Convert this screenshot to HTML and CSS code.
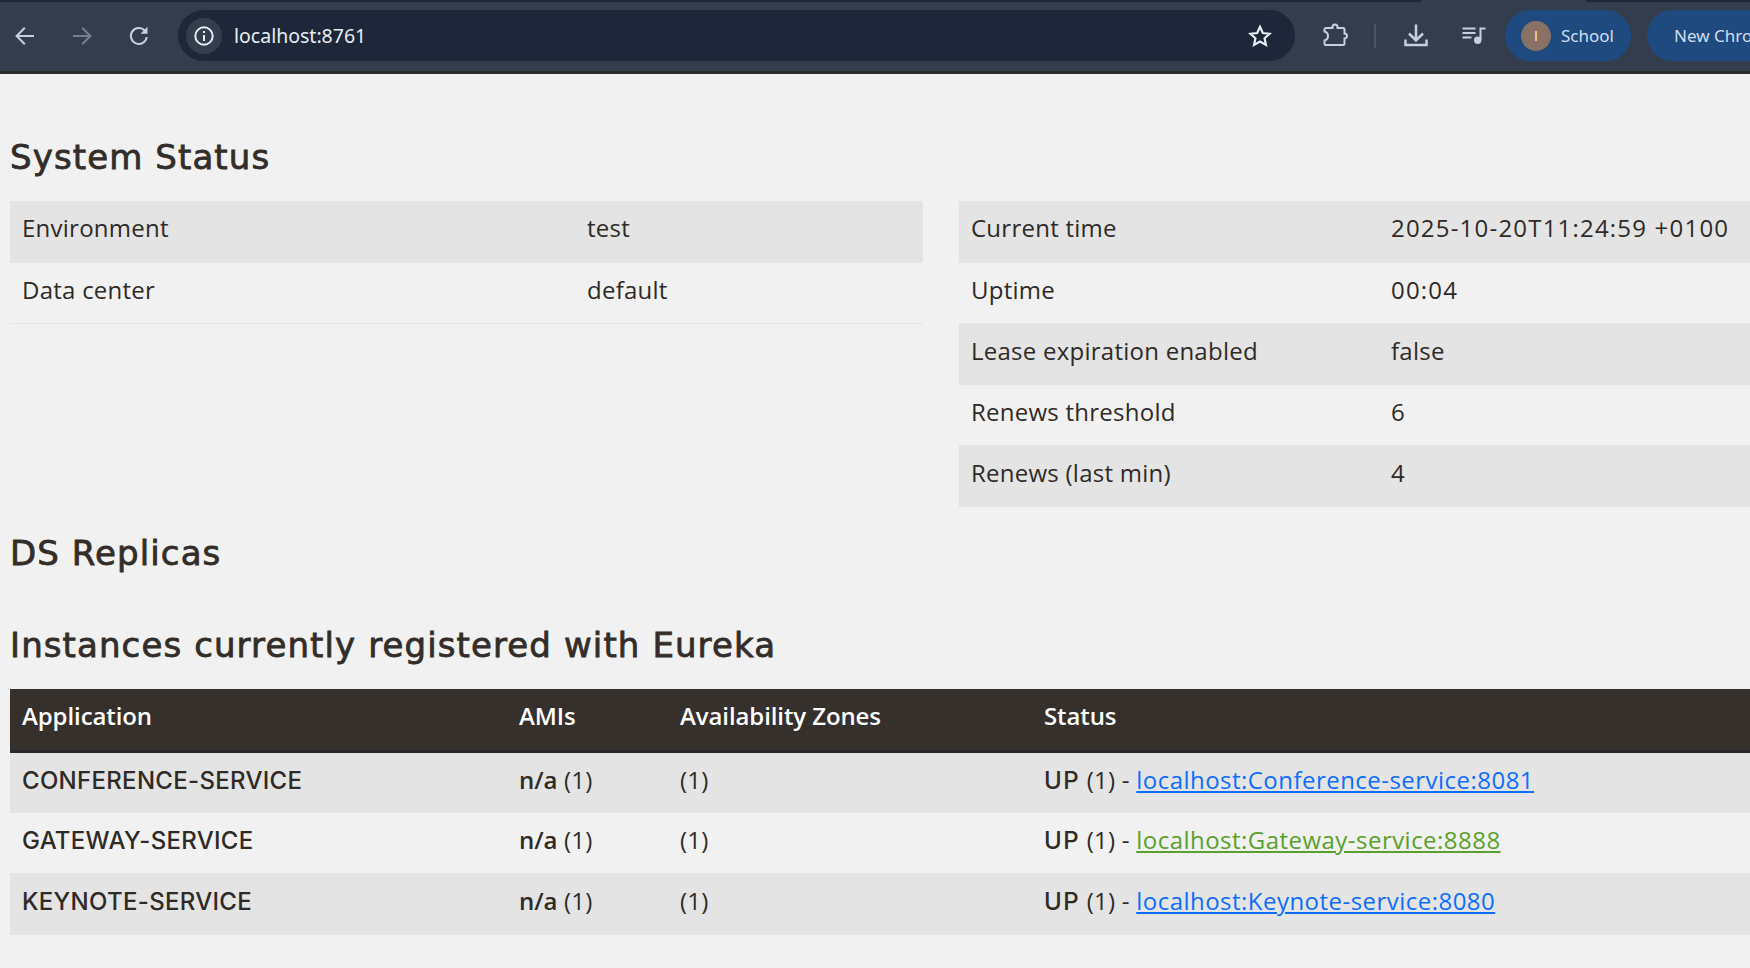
FILE: index.html
```html
<!DOCTYPE html>
<html lang="en">
<head>
<meta charset="utf-8">
<title>Eureka</title>
<link rel="stylesheet" href="styles.css">
</head>
<body>
<header class="chrome">
  <div class="tabstrip"><span class="tab-dark left-dark"></span><span class="tab-dark right-dark"></span></div>
  <div class="toolbar">
    <button class="nav"><svg viewBox="0 0 24 24" width="24" height="24"><path d="M21 12H4.500M11.800 3.800 3.600 12l8.200 8.200" class="st"/></svg></button>
    <button class="nav dim"><svg viewBox="0 0 24 24" width="24" height="24"><path d="M3 12h16.500M12.200 3.800 20.400 12l-8.200 8.200" class="st"/></svg></button>
    <button class="nav"><svg viewBox="0 0 24 24" width="24" height="24"><path d="M19.800 13.200A8 8 0 1 1 17.800 6.500" class="st"/><path d="M20.500 2.800v7h-7z" class="fl"/></svg></button>
    <div class="omnibox">
      <span class="info"><svg viewBox="0 0 24 24" width="24" height="24"><circle cx="12" cy="12" r="8.700" class="st wh"/><path d="M12 11v6M12 7v2" class="st wh"/></svg></span>
      <span class="url">localhost:8761</span>
      <svg class="star" viewBox="0 0 24 24" width="26" height="26"><path d="m12 3.500 2.600 5.700 6.200.7-4.600 4.200 1.300 6.100-5.500-3.100-5.500 3.100 1.300-6.100-4.600-4.200 6.200-.7z" class="st wh"/></svg>
    </div>
    <svg class="tool ext" viewBox="0 0 26 26" width="26" height="26"><path d="M3 5H9.500V4a2.500 2.500 0 0 1 5 0V5H20a1.500 1.500 0 0 1 1.500 1.500V10.500a2.500 2.500 0 0 1 0 5V20.500A1.500 1.500 0 0 1 20 22H3a1.500 1.500 0 0 1-1.500-1.500V17.500C4 16.800 5 15 5 13S4 9.200 1.500 8.500V6.500A1.500 1.500 0 0 1 3 5Z" class="st"/></svg>
    <span class="sep"></span>
    <svg class="tool dl" viewBox="0 0 26 26" width="26" height="26"><path d="M13 1.500V17M6 10.500l7 7 7-7M2.500 16.500V22h21v-5.500" class="st thick"/></svg>
    <svg class="tool media" viewBox="0 0 26 26" width="26" height="26"><path d="M1.500 5.500h13M1.500 10h13M1.500 14.500h9" class="st"/><path d="M19.500 17V5.500H24.500" class="st"/><circle cx="16.700" cy="17.200" r="3.700" class="fl"/></svg>
    <div class="pill profile"><span class="avatar">I</span><span>School</span></div>
    <div class="pill newchrome"><span>New Chrome available</span></div>
  </div>
</header>
<main class="page">
  <h2 class="h-status">System Status</h2>
  <div class="status-grid">
    <table class="tbl left">
      <tr class="odd"><td class="c1">Environment</td><td>test</td></tr>
      <tr><td class="c1">Data center</td><td>default</td></tr>
    </table>
    <table class="tbl right">
      <tr class="odd"><td class="c1r">Current time</td><td class="num">2025-10-20T11:24:59 +0100</td></tr>
      <tr><td class="c1r">Uptime</td><td class="num">00:04</td></tr>
      <tr class="odd"><td class="c1r">Lease expiration enabled</td><td>false</td></tr>
      <tr><td class="c1r">Renews threshold</td><td>6</td></tr>
      <tr class="odd"><td class="c1r">Renews (last min)</td><td>4</td></tr>
    </table>
  </div>
  <h2 class="h-ds">DS Replicas</h2>
  <h2 class="h-inst">Instances currently registered with Eureka</h2>
  <table class="tbl inst">
    <thead>
      <tr><th class="a">Application</th><th class="b">AMIs</th><th class="c">Availability Zones</th><th>Status</th></tr>
    </thead>
    <tbody>
      <tr class="odd"><td><b class="caps">CONFERENCE-SERVICE</b></td><td><b>n/a</b> (1)</td><td>(1)</td><td><b class="caps up">UP</b> (1) - <a href="#" class="blue">localhost:Conference-service:8081</a></td></tr>
      <tr><td><b class="caps">GATEWAY-SERVICE</b></td><td><b>n/a</b> (1)</td><td>(1)</td><td><b class="caps up">UP</b> (1) - <a href="#" class="green">localhost:Gateway-service:8888</a></td></tr>
      <tr class="odd"><td><b class="caps">KEYNOTE-SERVICE</b></td><td><b>n/a</b> (1)</td><td>(1)</td><td><b class="caps up">UP</b> (1) - <a href="#" class="blue">localhost:Keynote-service:8080</a></td></tr>
    </tbody>
  </table>
  <h2 class="h-gen">General Info</h2>
</main>
</body>
</html>
```
FILE: styles.css
```css
html, body { margin: 0; padding: 0; height: 100%; overflow: hidden; }
body { background: #f1f1f1; color: #2f2a26; font-family: "Open Sans", "Noto Sans", sans-serif; width: 1750px; height: 968px; }
.chrome { background: #343d4e; height: 74px; border-bottom: 3px solid #2c2c2c; box-sizing: border-box; overflow: hidden; }
.tabstrip { display: flex; justify-content: space-between; height: 2px; }
.tab-dark { background: #1f2839; height: 2px; }
.left-dark { width: 1421px; }
.right-dark { width: 164px; }
.toolbar { display: flex; align-items: center; height: 67px; white-space: nowrap; }
.nav { width: 24px; height: 24px; padding: 0; border: 0; background: none; margin-left: 13px; margin-right: 20px; flex: none; }
.nav.dim { opacity: .45; }
.st { fill: none; stroke: #c7d0e0; stroke-width: 2; }
.thick { stroke-width: 2.500; }
.wh { stroke: #e8ecf3; }
.fl { fill: #c7d0e0; }
.omnibox { display: flex; align-items: center; flex: none; width: 1117px; height: 51px; margin-left: 7px; border-radius: 26px; background: #1e2739; padding-left: 8px; box-sizing: border-box; }
.info { display: flex; align-items: center; justify-content: center; width: 36px; height: 36px; border-radius: 50%; background: #343d4e; }
.url { color: #e8ecf3; font-size: 19.500px; font-family: "Noto Sans", sans-serif; margin-left: 12px; flex: 1; }
.star { margin-right: 22px; }
.tool { flex: none; }
.ext { margin-left: 28px; }
.sep { width: 2px; height: 24px; background: #4a5364; margin: 0 27px 0 25px; flex: none; }
.media { margin-left: 32px; }
.pill { display: flex; align-items: center; height: 51px; border-radius: 26px; background: #1e4a80; color: #d3def0; font-size: 17px; font-family: "Noto Sans", sans-serif; flex: none; }
.profile { width: 126px; margin-left: 18px; padding-left: 16px; box-sizing: border-box; }
.avatar { display: flex; align-items: center; justify-content: center; width: 30px; height: 30px; border-radius: 50%; background: #8a7165; color: #f4efec; font-family: "Open Sans", sans-serif; font-size: 14px; margin-right: 10px; }
.newchrome { width: 260px; margin-left: 16px; padding-left: 27px; box-sizing: border-box; }
.page { padding: 0 10px; width: 1800px; box-sizing: border-box; }
h2 { font-family: "DejaVu Sans", sans-serif; font-weight: 400; -webkit-text-stroke: .8px #332d29; font-size: 34px; letter-spacing: 1.100px; line-height: 40px; margin: 0; color: #332d29; }
.h-status { margin-top: 63px; }
.status-grid { display: flex; gap: 36px; margin-top: 24px; align-items: flex-start; }
.tbl { border-collapse: collapse; font-size: 24px; letter-spacing: .25px; }
.tbl td, .tbl th { padding: 0 12px 7px; height: 61px; box-sizing: border-box; text-align: left; border-bottom: 1px solid #e2e5ea; white-space: nowrap; }
.left { width: 913px; flex: none; }
.left .c1 { width: 565px; }
.right { width: 900px; flex: none; }
.right .c1r { width: 420px; }
.num { letter-spacing: 1.200px; }
.odd td { background: #e4e4e4; }
.h-ds { margin-top: 26px; }
.h-inst { margin-top: 52px; }
.inst { width: 1740px; margin-top: 24px; }
.inst th { background: #36302d; color: #fff; font-weight: 600; letter-spacing: -.1px; border-bottom: 3px solid #29282a; height: 63px; }
.inst th.a { width: 497px; }
.inst th.b { width: 161px; }
.inst th.c { width: 364px; }
.inst b { font-weight: 600; letter-spacing: 0; }
.inst b.caps { font-family: Inter, "Open Sans", sans-serif; font-weight: 500; letter-spacing: .3px; }
.inst b.up { letter-spacing: 1.500px; }
.inst a { letter-spacing: .47px; }
.blue { color: #0d6efd; }
.green { color: #5aa02c; }
.h-gen { margin-top: 30px; }
```
